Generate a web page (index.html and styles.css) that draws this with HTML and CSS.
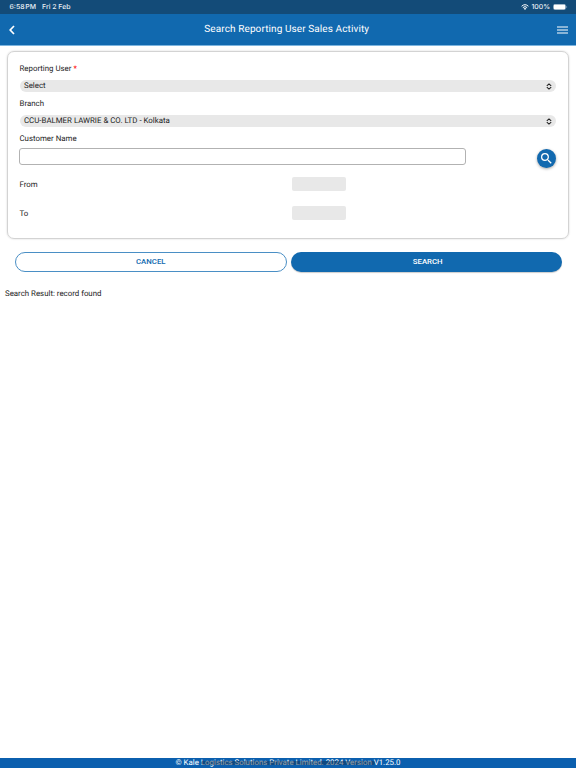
FILE: index.html
```html
<!DOCTYPE html>
<html lang="en">
  <head>
    <meta charset="UTF-8" />
    <meta name="viewport" content="width=device-width, initial-scale=1.0" />
    <title>Search Reporting User Sales Activity</title>
    <link rel="stylesheet" href="styles.css">
  </head>
  <body>
    <div class="status-bar">
      <span class="time">6:58 PM</span>
      <span class="date">Fri 2 Feb</span>
      <svg class="wifi" viewBox="0 0 16 12">
        <path d="M1.2 4.5a10 10 0 0 1 13.6 0M3.7 7.2a6.3 6.3 0 0 1 8.6 0" fill="none" stroke="#fff" stroke-width="2" />
        <path d="M8 12L5.3 9.2a4 4 0 0 1 5.4 0z" fill="#fff" />
      </svg>
      <span class="percent">100%</span>
      <svg class="battery" viewBox="0 0 15 6">
        <rect x="0.25" y="0.25" width="12.5" height="5.5" rx="1.7" fill="none" stroke="#8eabc4" stroke-width="0.5" />
        <rect x="0.6" y="0.6" width="11.8" height="4.8" rx="1.3" fill="#fff" />
        <path d="M13.4 2v2q.8-.3.8-1t-.8-1z" fill="#8eabc4" />
      </svg>
    </div>

    <header class="header">
      <svg class="back" viewBox="0 0 6 10">
        <path d="M5 1L1.2 5 5 9" fill="none" stroke="#fff" stroke-width="1.7" />
      </svg>
      <h1>Search Reporting User Sales Activity</h1>
      <svg class="menu" viewBox="0 0 11 8">
        <path d="M0 1h11M0 4h11M0 7h11" stroke="#fff" stroke-width="1.2" />
      </svg>
    </header>

    <main>
      <form class="card">
        <label>Reporting User <span class="required">*</span></label>
        <div class="select">
          <span>Select</span>
          <svg viewBox="0 0 6 7">
            <path d="M.8 2.9L3 .9 5.2 2.9M.8 4.1L3 6.1 5.2 4.1" fill="none" stroke="#222" stroke-width="1.1" />
          </svg>
        </div>

        <label>Branch</label>
        <div class="select">
          <span>CCU-BALMER LAWRIE &amp; CO. LTD - Kolkata</span>
          <svg viewBox="0 0 6 7">
            <path d="M.8 2.9L3 .9 5.2 2.9M.8 4.1L3 6.1 5.2 4.1" fill="none" stroke="#222" stroke-width="1.1" />
          </svg>
        </div>

        <label for="customerName">Customer Name</label>
        <div class="customer-row">
          <input type="text" id="customerName" />
          <button type="button" class="search-icon" aria-label="Search">
            <svg viewBox="3 3 18 18">
              <path fill="#fff" d="M15.5 14h-.79l-.28-.27A6.47 6.47 0 0 0 16 9.5 6.5 6.5 0 1 0 9.5 16c1.61 0 3.09-.59 4.23-1.57l.27.28v.79l5 4.99L20.49 19l-4.99-5zm-6 0C7.01 14 5 11.99 5 9.5S7.01 5 9.5 5 14 7.01 14 9.5 11.99 14 9.5 14z" />
            </svg>
          </button>
        </div>

        <div class="date-row">
          <span>From</span>
          <div class="date-box"></div>
        </div>
        <div class="date-row">
          <span>To</span>
          <div class="date-box"></div>
        </div>
      </form>

      <div class="actions">
        <button type="button" class="cancel">CANCEL</button>
        <button type="button" class="search">SEARCH</button>
      </div>

      <p class="result">Search Result: record found</p>
    </main>

    <footer class="footer">
      <span>© Kale Logistics Solutions Private Limited. 2024 Version V1.25.0</span>
      <div class="home-indicator"></div>
    </footer>
  </body>
</html>
```

FILE: styles.css
```css
* {
  box-sizing: border-box;
}
body {
  display: flex;
  flex-direction: column;
  height: 768px;
  margin: 0;
  overflow: hidden;
  font-family: Roboto, sans-serif;
  font-size: 7.87px;
  line-height: 10px;
  text-rendering: geometricPrecision;
  color: #1c1c1c;
  background-color: #fff;
}
svg {
  display: block;
  flex: none;
}
.status-bar {
  display: flex;
  align-items: center;
  height: 14px;
  padding: 0 8px 0 9.5px;
  font-family: Inter, sans-serif;
  font-size: 6.9px;
  font-weight: 500;
  color: #e8eef4;
  background-color: #134b78;
}
.time {
  word-spacing: -1px;
}
.date {
  margin-left: 6px;
}
.wifi {
  width: 8px;
  height: 6px;
  margin-left: auto;
}
.percent {
  margin: 0 3px 0 2px;
}
.battery {
  width: 15px;
  height: 6px;
}
.header {
  display: flex;
  align-items: center;
  justify-content: space-between;
  height: 32px;
  padding: 0 8px 0 8.5px;
  background-color: #1169af;
  border-bottom: 1px solid #7db5df;
}
.back {
  width: 6px;
  height: 10px;
}
.menu {
  width: 11px;
  height: 8px;
}
h1 {
  margin: 0 0 0 2px;
  padding-top: 1px;
  font-size: 10px;
  font-weight: 400;
  line-height: 12px;
  letter-spacing: 0.1px;
  color: #fff;
}
main {
  flex: 1;
  padding: 5px 7px 0;
}
.card {
  height: 188px;
  padding: 12px 12px 0 11px;
  border: 1px solid #d3d3d3;
  border-radius: 7px;
  box-shadow: 0 0 2px rgba(0, 0, 0, 0.18);
}
label {
  display: block;
  padding-left: 0.5px;
}
.required {
  color: #f00;
}
.select {
  display: flex;
  align-items: center;
  justify-content: space-between;
  height: 12px;
  margin: 6px 0 7px 1px;
  padding: 0 4px;
  border-radius: 6px;
  background-color: #e8e8e8;
}
.select svg {
  width: 6px;
  height: 7px;
}
.customer-row {
  display: flex;
  justify-content: space-between;
  height: 29px;
  margin-top: 4px;
}
input {
  width: 447px;
  height: 17px;
  padding: 0 4px;
  border: 1px solid #b2b2b2;
  border-radius: 3px;
}
.search-icon {
  display: flex;
  align-items: center;
  justify-content: center;
  width: 19px;
  height: 19px;
  margin-top: 1px;
  padding: 0;
  border: none;
  border-radius: 50%;
  background-color: #1169af;
  box-shadow: 0 1px 3px rgba(0, 0, 0, 0.35);
}
.search-icon svg {
  width: 11px;
  height: 11px;
}
.date-row {
  display: grid;
  grid-template-columns: 272.5px 54px;
  align-items: center;
  height: 14px;
  margin-bottom: 15px;
}
.date-row span {
  padding: 2px 0 0 0.5px;
}
.date-box {
  height: 14px;
  border-radius: 2px;
  background-color: #e8e8e8;
}
.actions {
  display: grid;
  grid-template-columns: 1fr 1fr;
  gap: 4px;
  padding: 13px 7px 0 8px;
}
.actions button {
  height: 20px;
  padding: 0 0 1px;
  border: none;
  border-radius: 10px;
  font-family: Roboto, sans-serif;
  font-size: 7.8px;
  font-weight: 500;
}
.actions .cancel {
  color: #1169af;
  background-color: #fff;
  border: 1px solid #4a8fc5;
}
.actions .search {
  padding-left: 3px;
  color: #fff;
  background-color: #1169af;
  box-shadow: 0 1px 1px rgba(0, 0, 0, 0.2);
}
.result {
  margin: 17px 0 0 -2px;
}
.footer {
  position: relative;
  height: 10px;
  text-align: center;
  color: #fff;
  background-color: #0b5fae;
}
.footer span {
  display: block;
}
.home-indicator {
  position: absolute;
  top: 3px;
  left: 201px;
  width: 174px;
  height: 4px;
  border-radius: 2px;
  background-color: rgba(20, 50, 80, 0.48);
}
```
